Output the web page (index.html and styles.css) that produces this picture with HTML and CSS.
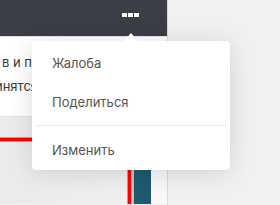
FILE: index.html
```
<!DOCTYPE html>
<html lang="ru">
<head>
<meta charset="utf-8">
<link rel="stylesheet" href="styles.css">
</head>
<body>
<div class="screen">
  <div class="col">
    <div class="header">
      <div class="dots"><span></span><span></span><span></span></div>
    </div>
    <div class="post">
      <p class="text"><span class="line first">в и пожеланий будут</span><span class="line second">инятся во внимание</span></p>
    </div>
    <svg class="media" width="167" height="88" viewBox="0 0 167 88">
      <defs>
        <linearGradient id="g" x1="0" y1="0" x2="1" y2="0">
          <stop offset="0" stop-color="#ebebeb"/>
          <stop offset="1" stop-color="#f1f1f1"/>
        </linearGradient>
      </defs>
      <rect x="0" y="0" width="167" height="88" fill="url(#g)"/>
      <rect x="0" y="0" width="167" height="1" fill="#e2e2e2"/>
      <rect x="0" y="21" width="131" height="5" fill="#ff8080"/>
      <rect x="0" y="22" width="130" height="3" fill="#ff0000"/>
      <rect x="127" y="22" width="5" height="66" fill="#ff8080"/>
      <rect x="128" y="22" width="3" height="66" fill="#ff0000"/>
      <rect x="132" y="40" width="2" height="48" fill="#b9c4c9"/>
      <rect x="134" y="40" width="17" height="48" fill="#1f5a6f"/>
      <rect x="151" y="40" width="16" height="48" fill="#f8f8f8"/>
    </svg>
  </div>
  <div class="side"></div>

  <div class="menu">
    <div class="item">Жалоба</div>
    <div class="item">Поделиться</div>
    <div class="sep"></div>
    <div class="item">Изменить</div>
  </div>
</div>
</body>
</html>
```
FILE: styles.css
```
html, body {
  margin: 0;
  padding: 0;
}
body {
  width: 280px;
  height: 205px;
  overflow: hidden;
  background: #f1f1f1;
  font-family: Inter, "Noto Sans", "Liberation Sans", sans-serif;
}
.screen {
  position: relative;
  display: grid;
  grid-template-columns: 168px 1fr;
  height: 205px;
}
.col {
  display: flex;
  flex-direction: column;
  border-right: 1px solid #d9d9d9;
  width: 167px;
  overflow: hidden;
}
.header {
  height: 37px;
  background: #3b3e47;
  border-bottom: 1px solid #e4e4e4;
  display: flex;
  justify-content: flex-end;
  align-items: flex-start;
  padding: 13px 28px 0 0;
  box-sizing: border-box;
  flex: none;
}
.dots {
  display: flex;
  gap: 1px;
}
.dots span {
  width: 5px;
  height: 4px;
  background: #ffffff;
}
.post {
  background: #ffffff;
  padding: 13px 0 18px;
  flex: none;
}
.text {
  margin: 0;
  font-size: 13px;
  line-height: 24px;
  color: #3a3a3a;
}
.line {
  display: block;
  white-space: nowrap;
}
.first {
  margin-left: 2px;
}
.second {
  margin-left: -5px;
}
.media {
  display: block;
  flex: none;
}
.side {
  background: #f1f1f1;
}
.menu {
  position: absolute;
  left: 32px;
  top: 41px;
  width: 198px;
  height: 129px;
  box-sizing: border-box;
  padding-top: 2px;
  background: #ffffff;
  border-radius: 4px;
  box-shadow: 0 3px 26px rgba(0, 0, 0, 0.13), 0 0 1px rgba(0, 0, 0, 0.08);
}
.menu::before {
  content: "";
  position: absolute;
  top: -8px;
  left: 92px;
  border-left: 7px solid transparent;
  border-right: 7px solid transparent;
  border-bottom: 8px solid #ffffff;
}
.item {
  height: 39px;
  display: flex;
  align-items: center;
  padding-left: 20px;
  font-size: 13px;
  color: #555555;
}
.sep {
  height: 1px;
  background: #e8e8e8;
  margin: 4px 4px;
}
```
